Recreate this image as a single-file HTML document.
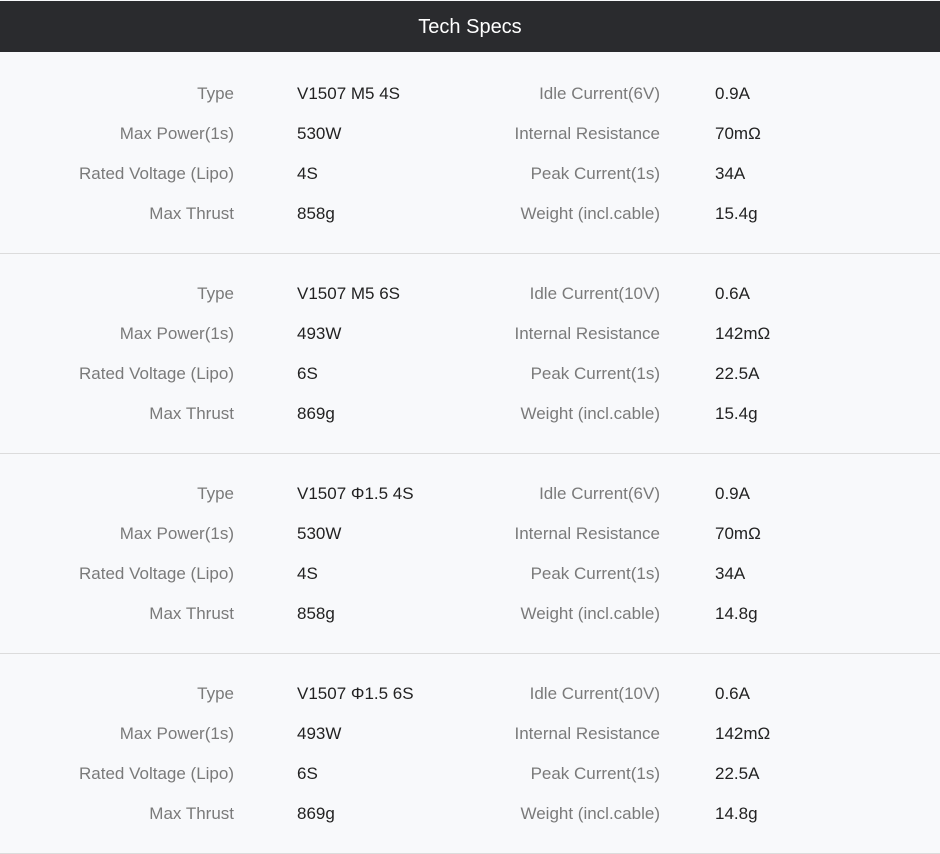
<!DOCTYPE html><html><head><style>
body{margin:0;width:940px;height:854px;background:#f8f9fb;font-family:"Liberation Sans",sans-serif;font-size:17px;position:relative;overflow:hidden}
.h{position:absolute;top:1px;left:0;width:940px;height:51px;background:#2a2b2e;color:#fff;font-size:20px;text-align:center;line-height:53px}
.sec{position:absolute;left:0;width:940px;height:200px;border-bottom:1px solid #dcdcdc;box-sizing:border-box}
.r{position:absolute;height:20px;line-height:20px;white-space:nowrap}
.l1{right:706px;color:#7a7a7a;text-align:right}
.v1{left:297px;color:#222}
.l2{right:280px;color:#7a7a7a;text-align:right}
.v2{left:715px;color:#222}
</style></head><body>
<div class="h">Tech Specs</div>
<div id="c"></div>
<script>
var d=[["V1507 M5 4S","530W","4S","858g","Idle Current(6V)","0.9A","70mΩ","34A","15.4g"],
["V1507 M5 6S","493W","6S","869g","Idle Current(10V)","0.6A","142mΩ","22.5A","15.4g"],
["V1507 Φ1.5 4S","530W","4S","858g","Idle Current(6V)","0.9A","70mΩ","34A","14.8g"],
["V1507 Φ1.5 6S","493W","6S","869g","Idle Current(10V)","0.6A","142mΩ","22.5A","14.8g"]];
var L=["Type","Max Power(1s)","Rated Voltage (Lipo)","Max Thrust"];
var R=[null,"Internal Resistance","Peak Current(1s)","Weight (incl.cable)"];
var h="";
d.forEach(function(s,i){
 h+='<div class="sec" style="top:'+(54+200*i)+'px">';
 for(var k=0;k<4;k++){var y=30+40*k;
  h+='<div class="r l1" style="top:'+y+'px">'+L[k]+'</div>';
  h+='<div class="r v1" style="top:'+y+'px">'+s[k]+'</div>';
  h+='<div class="r l2" style="top:'+y+'px">'+(k==0?s[4]:R[k])+'</div>';
  h+='<div class="r v2" style="top:'+y+'px">'+s[5+k]+'</div>';}
 h+='</div>';});
document.getElementById("c").innerHTML=h;
</script>
</body></html>
